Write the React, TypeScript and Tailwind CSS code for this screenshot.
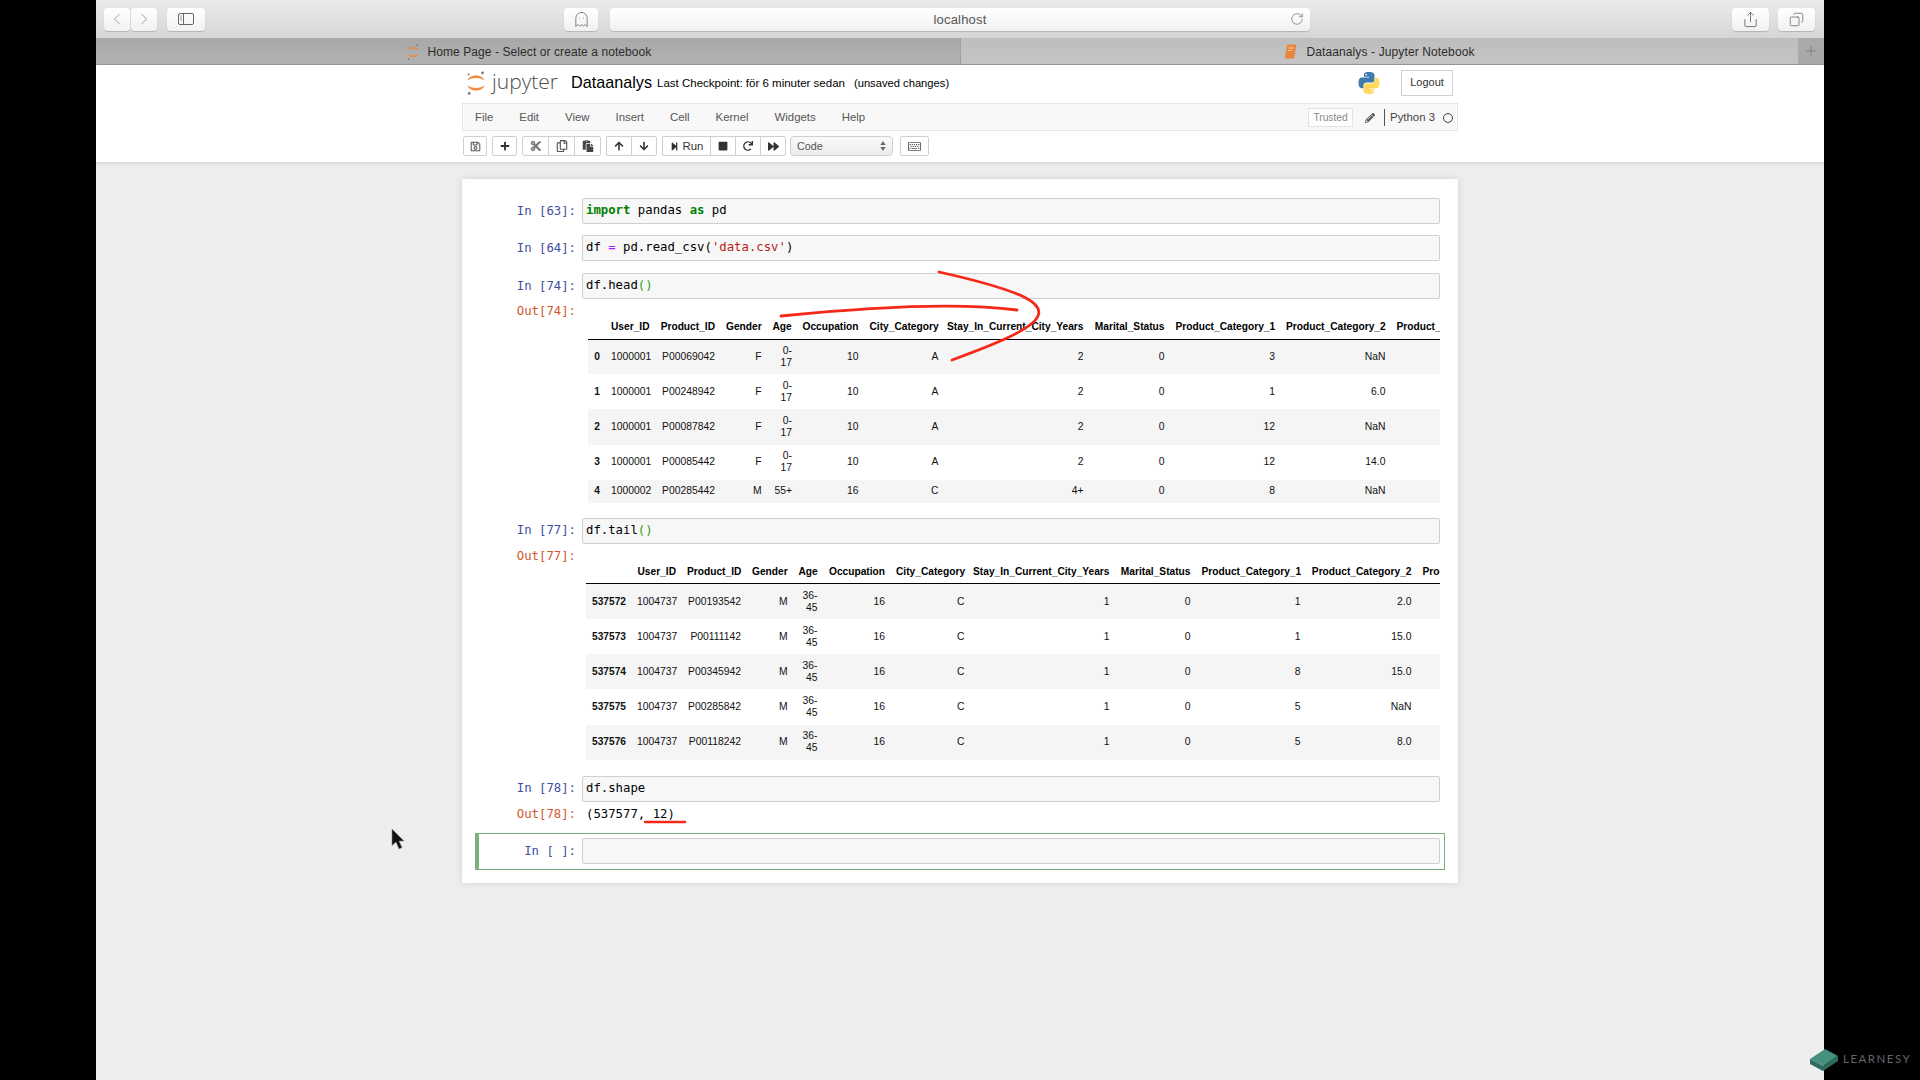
import React from "react";
import { ChevronLeft, ChevronRight, Ghost, RotateCw, Share, Copy, Plus } from "lucide-react";
import {
  FaRegSave, FaPlus, FaCut, FaRegCopy, FaPaste, FaArrowUp, FaArrowDown, FaStepForward,
  FaStop, FaRedo, FaForward, FaRegKeyboard, FaPencilAlt,
} from "react-icons/fa";

const mono = "font-['DejaVu_Sans_Mono','Liberation_Mono',monospace] text-[12.3px] leading-[17px]";
const sans = "font-['Liberation_Sans',Arial,sans-serif]";

function JupyterMark({ className }: { className: string }) {
  return (
    <svg viewBox="0 0 18 24" className={className}>
      <path d="M0.5 9.5C2.5 2.8 15.5 2.8 17.5 9.5C14 6.2 4 6.2 0.5 9.5Z" fill="#f08a3c" />
      <path d="M0.5 14.5C2.5 21.2 15.5 21.2 17.5 14.5C14 17.8 4 17.8 0.5 14.5Z" fill="#f08a3c" />
      <circle cx="15.5" cy="1.8" r="1.4" fill="#767677" />
      <circle cx="1.6" cy="3.4" r="0.9" fill="#767677" />
      <circle cx="2.2" cy="22.4" r="1.3" fill="#767677" />
    </svg>
  );
}

function PythonMark({ className }: { className: string }) {
  return (
    <svg viewBox="0 0 24 24" className={className}>
      <path d="M11.9 1C6.6 1 7 3.3 7 3.3V5.8H12.1V6.6H5C5 6.6 1.5 6.2 1.5 11.8C1.5 17.4 4.6 17.2 4.6 17.2H6.5V14.6C6.5 14.6 6.4 11.5 9.5 11.5H14.6C14.6 11.5 17.5 11.6 17.5 8.7V3.9C17.5 3.9 17.9 1 11.9 1ZM9.1 2.7C9.6 2.7 10 3.1 10 3.6C10 4.1 9.6 4.5 9.1 4.5C8.6 4.5 8.2 4.1 8.2 3.6C8.2 3.1 8.6 2.7 9.1 2.7Z" fill="#3f7cad" />
      <path d="M12.1 23C17.4 23 17 20.7 17 20.7V18.2H11.9V17.4H19C19 17.4 22.5 17.8 22.5 12.2C22.5 6.6 19.4 6.8 19.4 6.8H17.5V9.4C17.5 9.4 17.6 12.5 14.5 12.5H9.4C9.4 12.5 6.5 12.4 6.5 15.3V20.1C6.5 20.1 6.1 23 12.1 23ZM14.9 21.3C14.4 21.3 14 20.9 14 20.4C14 19.9 14.4 19.5 14.9 19.5C15.4 19.5 15.8 19.9 15.8 20.4C15.8 20.9 15.4 21.3 14.9 21.3Z" fill="#ffd95c" />
    </svg>
  );
}

function Safari() {
  const btn = "h-[23px] flex items-center justify-center rounded-[4px] bg-gradient-to-b from-white to-[#f1f1f1] shadow-[0_1px_1px_rgba(0,0,0,0.18)] text-[#7d7d7d]";
  return (
    <div className="h-[38px] shrink-0 flex items-center pl-[8px] pr-[9px] bg-gradient-to-b from-[#ebebeb] to-[#d6d6d6]">
      <div className={`${btn} w-[26px]`}><ChevronLeft size={20} strokeWidth={1} className="text-[#8f8f8f]" /></div>
      <div className={`${btn} w-[26px] ml-[1px]`}><ChevronRight size={20} strokeWidth={1} className="text-[#8f8f8f]" /></div>
      <div className={`${btn} w-[38px] ml-[10px]`}>
        <svg width="16" height="14" viewBox="0 0 16 14" fill="none" stroke="#666" strokeWidth="1">
          <rect x="0.5" y="1.5" width="15" height="11" rx="1.5" />
          <path d="M5.5 1.5V12.5" />
          <path d="M2 4H4M2 6H4M2 8H4" stroke="#999" />
        </svg>
      </div>
      <div className={`${btn} w-[34px] ml-[359px]`}><Ghost size={17} strokeWidth={1} className="text-[#555]" /></div>
      <div className={`${btn} w-[700px] ml-[12px] relative text-[#555] ${sans} text-[13px]`}>
        <span className="tracking-[0.2px] pt-[1px]">localhost</span>
        <RotateCw size={14} strokeWidth={1} className="absolute right-[6px] top-[4px] text-[#555]" />
      </div>
      <div className={`${btn} w-[37px] ml-auto`}><Share size={17} strokeWidth={1} className="text-[#444]" /></div>
      <div className={`${btn} w-[37px] ml-[9px]`}><Copy size={15} strokeWidth={1} className="text-[#444] -scale-x-100" /></div>
    </div>
  );
}

function Tabs() {
  return (
    <div className={`h-[27px] shrink-0 flex border-b border-[#9a9a9a] text-[12px] text-[#2c2c2c] ${sans}`}>
      <div className="w-[864px] pt-[1px] flex items-center justify-center gap-[7px] bg-gradient-to-b from-[#a8a8a8] to-[#b2b2b2]">
        <JupyterMark className="w-[16px] h-[16px]" />
        <span className="tracking-[0.08px]">Home Page - Select or create a notebook</span>
      </div>
      <div className="flex-1 pt-[1px] flex items-center justify-center gap-[9px] bg-gradient-to-b from-[#bdbdbd] to-[#c5c5c5] border-l border-[#a0a0a0]">
        <svg width="13" height="15" viewBox="0 0 13 15">
          <path d="M3 0.5H12.5L10 14.5H0.8Z" fill="#e8863f" />
          <path d="M4.5 4H10M4 6.5H8" stroke="#f7c9a3" strokeWidth="1" />
        </svg>
        <span className="tracking-[0.12px]">Dataanalys - Jupyter Notebook</span>
      </div>
      <div className="w-[26px] flex items-center justify-center bg-[#a9a9a9] text-[#6f6f6f]">
        <Plus size={16} strokeWidth={1} />
      </div>
    </div>
  );
}

const barBtn = "h-[20px] flex items-center justify-center bg-white border border-[#cfcfcf] text-[#333] text-[11px]";

function JupyterHeader() {
  return (
    <div className="shrink-0 bg-white shadow-[0_1px_4px_rgba(0,0,0,0.15)] h-[97px]">
      <div className={`w-[996px] mx-auto ${sans}`}>
        <div className="h-[38px] flex items-center pl-[5px] pr-[5px] pb-[3px]">
          <JupyterMark className="w-[18px] h-[24px]" />
          <span className="ml-[7px] text-[21px] leading-none text-[#4e4e4e] font-['Open_Sans',sans-serif] font-light -mt-[2px]">jupyter</span>
          <span className="ml-[13px] text-[16.2px] text-black">Dataanalys</span>
          <span className="ml-[5px] text-[11.5px] text-black mt-[2px]">Last Checkpoint: för 6 minuter sedan</span>
          <span className="ml-[9px] text-[11.2px] text-black mt-[2px]">(unsaved changes)</span>
          <PythonMark className="ml-auto w-[24px] h-[24px]" />
          <div className="ml-[20px] w-[52px] h-[26px] flex items-center justify-center border border-[#d0d0d0] text-[11px] text-[#333]">Logout</div>
        </div>
        <div className="h-[28px] pt-[1px] flex items-center bg-[#f8f8f8] border border-[#e7e7e7] pl-[12px] pr-[4px] text-[11.4px] text-[#555]">
          <div className="flex gap-[26px]">
            {["File", "Edit", "View", "Insert", "Cell", "Kernel", "Widgets", "Help"].map((m) => <span key={m}>{m}</span>)}
          </div>
          <div className="ml-auto mr-[2px] w-[45px] h-[19px] flex items-center justify-center bg-white border border-[#e3e3e3] text-[10.2px] text-[#8a8a8a]">Trusted</div>
          <FaPencilAlt className="ml-[10px] w-[10px] h-[10px] text-[#555]" />
          <div className="ml-[9px] w-px h-[17px] bg-[#555]" />
          <span className="ml-[5px] text-[#444]">Python 3</span>
          <div className="ml-[8px] w-[10px] h-[10px] rounded-full border border-[#444]" />
        </div>
        <div className="h-[26px] pt-[5px] flex items-start">
          <div className={`${barBtn} w-[24px] rounded-[2px] ml-[1px]`}><FaRegSave className="w-[11px] h-[11px] text-[#555]" /></div>
          <div className={`${barBtn} w-[25px] rounded-[2px] ml-[5px]`}><FaPlus className="w-[10px] h-[10px]" /></div>
          <div className={`${barBtn} w-[27px] rounded-l-[2px] ml-[5px]`}><FaCut className="w-[12px] h-[12px] text-[#777]" /></div>
          <div className={`${barBtn} w-[27px] -ml-px`}><FaRegCopy className="w-[12px] h-[12px] text-[#555]" /></div>
          <div className={`${barBtn} w-[27px] rounded-r-[2px] -ml-px`}><FaPaste className="w-[12px] h-[12px] text-[#444]" /></div>
          <div className={`${barBtn} w-[26px] rounded-l-[2px] ml-[5px]`}><FaArrowUp className="w-[10px] h-[10px]" /></div>
          <div className={`${barBtn} w-[26px] rounded-r-[2px] -ml-px`}><FaArrowDown className="w-[10px] h-[10px]" /></div>
          <div className={`${barBtn} w-[49px] rounded-l-[2px] ml-[5px] gap-[4px]`}><FaStepForward className="w-[9px] h-[9px]" /><span className="text-[11.4px] pt-[1px]">Run</span></div>
          <div className={`${barBtn} w-[26px] -ml-px`}><FaStop className="w-[10px] h-[10px]" /></div>
          <div className={`${barBtn} w-[26px] -ml-px`}><FaRedo className="w-[10px] h-[10px]" /></div>
          <div className={`${barBtn} w-[26px] rounded-r-[2px] -ml-px`}><FaForward className="w-[11px] h-[11px]" /></div>
          <div className="ml-[4px] w-[103px] h-[20px] flex items-center justify-between pl-[6px] pr-[6px] rounded-[4px] border border-[#cfcfcf] bg-gradient-to-b from-[#fafafa] to-[#ececec] text-[10.8px] text-[#555]">
            <span>Code</span>
            <svg width="6" height="10" viewBox="0 0 6 10" fill="#666"><path d="M3 0L5.6 4H0.4Z" /><path d="M3 10L0.4 6H5.6Z" /></svg>
          </div>
          <div className={`${barBtn} w-[29px] rounded-[2px] ml-[7px]`}><FaRegKeyboard className="w-[13px] h-[13px] text-[#555]" /></div>
        </div>
      </div>
    </div>
  );
}

function Prompt({ kind, n, tall }: { kind: "In" | "Out"; n: string; tall?: boolean }) {
  const color = kind === "In" ? "text-[#3f4f9f]" : "text-[#cf5a30]";
  return (
    <div className={`w-[103px] shrink-0 pr-[6px] text-right ${mono} ${color} ${tall ? "pt-[4px]" : ""}`}>
      {kind}
      <span className={kind === "In" ? "ml-[7.4px]" : ""}>[{n}]:</span>
    </div>
  );
}

function InputRow({ n, children }: { n: string; children?: React.ReactNode }) {
  return (
    <div className="flex items-center">
      <Prompt kind="In" n={n} />
      <div className={`flex-1 h-[26px] flex items-center px-[3px] bg-[#f7f7f7] border border-[#cfcfcf] rounded-[2px] text-black ${mono}`}>
        <span className="whitespace-pre -mt-px">{children}</span>
      </div>
    </div>
  );
}

const Kw = ({ children }: { children: React.ReactNode }) => <span className="text-[#008000] font-bold">{children}</span>;
const Br = () => <span className="text-[#22a022]">()</span>;

const headHeader = ["", "User_ID", "Product_ID", "Gender", "Age", "Occupation", "City_Category", "Stay_In_Current_City_Years", "Marital_Status", "Product_Category_1", "Product_Category_2", "Product_Category_3"];
const headRows = [
  ["0", "1000001", "P00069042", "F", "0-17", "10", "A", "2", "0", "3", "NaN", ""],
  ["1", "1000001", "P00248942", "F", "0-17", "10", "A", "2", "0", "1", "6.0", ""],
  ["2", "1000001", "P00087842", "F", "0-17", "10", "A", "2", "0", "12", "NaN", ""],
  ["3", "1000001", "P00085442", "F", "0-17", "10", "A", "2", "0", "12", "14.0", ""],
  ["4", "1000002", "P00285442", "M", "55+", "16", "C", "4+", "0", "8", "NaN", ""],
];
const tailRows = [
  ["537572", "1004737", "P00193542", "M", "36-45", "16", "C", "1", "0", "1", "2.0", ""],
  ["537573", "1004737", "P00111142", "M", "36-45", "16", "C", "1", "0", "1", "15.0", ""],
  ["537574", "1004737", "P00345942", "M", "36-45", "16", "C", "1", "0", "8", "15.0", ""],
  ["537575", "1004737", "P00285842", "M", "36-45", "16", "C", "1", "0", "5", "NaN", ""],
  ["537576", "1004737", "P00118242", "M", "36-45", "16", "C", "1", "0", "5", "8.0", ""],
];
const headCols = ["w-[17.5px]", "w-[49.5px]", "w-[65.5px]", "w-[46.5px]", "w-[30px]", "w-[67px]", "w-[80px]", "w-[145px]", "w-[81px]", "w-[110.5px]", "w-[110.5px]", "w-[110.5px]"];
const tailCols = ["w-[45.5px]", "w-[50px]", "w-[65px]", "w-[46.5px]", "w-[29.5px]", "w-[68px]", "w-[79.5px]", "w-[145px]", "w-[81px]", "w-[110px]", "w-[111px]", "w-[110px]"];

function DataTable({ cols, rows, wide, two }: { cols: string[]; rows: string[][]; wide: string; two: (r: string[]) => boolean }) {
  return (
    <table className={`table-fixed border-collapse ${wide} ${sans} text-[10.35px] leading-[12px] text-[#111]`}>
      <colgroup>{cols.map((c, i) => <col key={i} className={c} />)}</colgroup>
      <thead>
        <tr className="h-[23px] border-b border-black">
          {headHeader.map((h, i) => (
            <th key={i} className={`pr-[5.5px] ${i === 7 ? "pl-[2px]" : "pl-[5.5px]"} text-right font-bold whitespace-nowrap text-black text-[10.2px]`}>{h}</th>
          ))}
        </tr>
      </thead>
      <tbody>
        {rows.map((r, ri) => (
          <tr key={ri} className={`${two(r) ? "h-[35.2px]" : "h-[23px]"} ${ri % 2 === 0 ? "bg-[#f5f5f5]" : "bg-white"}`}>
            {r.map((v, i) => (
              <td key={i} className={`px-[5.5px] text-right align-middle ${i === 0 ? "font-bold text-[10.2px]" : ""} ${i === 4 ? "pr-[5px] pl-[5px]" : ""}`}>{v}</td>
            ))}
          </tr>
        ))}
      </tbody>
    </table>
  );
}

function OutputRow({ n, children, pad }: { n: string; children: React.ReactNode; pad: string }) {
  return (
    <div className="flex items-start">
      <Prompt kind="Out" n={n} tall />
      <div className={`flex-1 min-w-0 overflow-hidden ${pad}`}>{children}</div>
    </div>
  );
}

const cellBox = "mx-[13px] pr-[5px] pl-[4px]";

function Notebook() {
  return (
    <div className="w-[996px] h-[704px] mx-auto mt-[17px] bg-white shadow-[0_0_8px_rgba(0,0,0,0.12)] pt-[19px]">
      <div className={cellBox}>
        <InputRow n="63"><Kw>import</Kw> pandas <Kw>as</Kw> pd</InputRow>
      </div>
      <div className={`${cellBox} mt-[11px]`}>
        <InputRow n="64">df <span className="text-[#aa22ff]">=</span> pd.read_csv(<span className="text-[#ba2121]">'data.csv'</span>)</InputRow>
      </div>
      <div className={`${cellBox} mt-[12px]`}>
        <InputRow n="74">df.head<Br /></InputRow>
        <OutputRow n="74" pad="pl-[6px] pt-[17px]">
          <DataTable cols={headCols} rows={headRows} wide="w-[913.5px]" two={(r) => r[4] === "0-17"} />
        </OutputRow>
      </div>
      <div className={`${cellBox} mt-[15px]`}>
        <InputRow n="77">df.tail<Br /></InputRow>
        <OutputRow n="77" pad="pl-[4px] pt-[17px]">
          <DataTable cols={tailCols} rows={tailRows} wide="w-[941px]" two={() => true} />
        </OutputRow>
      </div>
      <div className={`${cellBox} mt-[16px]`}>
        <InputRow n="78">df.shape</InputRow>
        <OutputRow n="78" pad="pl-[4px] pt-[4px]">
          <div className={`${mono} text-black`}>(537577, 12)</div>
        </OutputRow>
      </div>
      <div className="mx-[13px] mt-[10px] h-[37px] flex items-center border border-l-4 border-[#79b07d] pr-[4px]">
        <div className="flex-1"><InputRow n=" "></InputRow></div>
      </div>
    </div>
  );
}

function Overlay() {
  return (
    <svg width="1920" height="1080" viewBox="0 0 1920 1080" fill="none" className="absolute left-0 top-0 pointer-events-none">
      <path d="M781 316C850 309 950 301 1017 310" stroke="#f5281a" strokeWidth="2.8" strokeLinecap="round" />
      <path d="M939 272C975 280 1005 288 1024 297C1036 303 1041 309 1038 316C1032 330 990 346 952 360" stroke="#f5281a" strokeWidth="2.8" strokeLinecap="round" />
      <path d="M645 822H685" stroke="#f5281a" strokeWidth="2.4" strokeLinecap="round" />
      <path d="M392 829V845.5L396 842L399 849L402 847.5L399 841H404Z" fill="#111" stroke="#888" strokeWidth="0.6" />
      <path d="M1810 1059L1825 1049L1838 1056L1823 1066Z" fill="#46907f" />
      <path d="M1810 1059V1064L1823 1071L1838 1061V1056L1823 1066Z" fill="#2f6b5e" />
    </svg>
  );
}

export default function App() {
  return (
    <div className="relative w-[1920px] h-[1080px] overflow-hidden bg-black">
      <div className="w-[1728px] h-[1080px] mx-auto flex flex-col bg-[#eeeeee]">
        <Safari />
        <Tabs />
        <JupyterHeader />
        <Notebook />
      </div>
      <Overlay />
      <span className="absolute left-[1843px] top-[1052px] text-[11.5px] leading-[14px] tracking-[1.5px] text-[#62666a] font-['Lato',sans-serif]">LEARNESY</span>
    </div>
  );
}
